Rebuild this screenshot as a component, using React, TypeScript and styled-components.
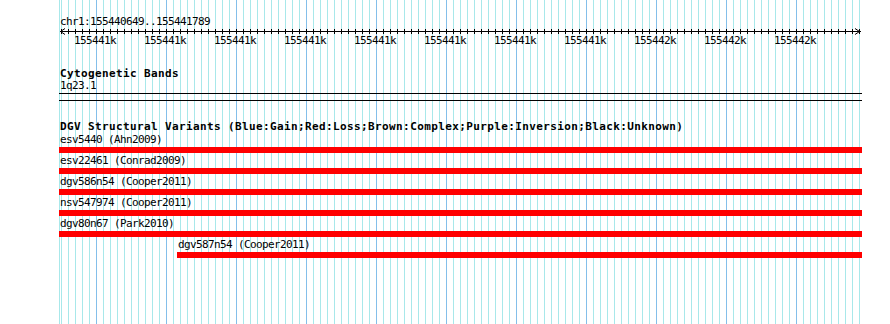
import React from "react";
import styled, { createGlobalStyle } from "styled-components";

const GlobalStyle = createGlobalStyle`
  html, body {
    margin: 0;
    padding: 0;
    background: #ffffff;
  }
`;

const TRACK_WIDTH = 803;
const MINOR = 7;
const GRID_LIGHT = "#a8e8ea";
const GRID_MAJOR = "#84bfea";

const Track = styled.div`
  margin-left: 59px;
  width: ${TRACK_WIDTH}px;
  min-height: 100vh;
  padding-top: 16px;
  box-sizing: border-box;
  font-family: "DejaVu Sans Mono", "Liberation Mono", monospace;
  color: #000;
  background-image:
    linear-gradient(to right, ${GRID_MAJOR} 0 1px, transparent 1px),
    linear-gradient(to right, ${GRID_LIGHT} 0 1px, transparent 1px),
    linear-gradient(to right, ${GRID_LIGHT} 0 1px, transparent 1px);
  background-size: 70px 100%, ${MINOR}px 100%, 1px 100%;
  background-position: 37px 0, 2px 0, 0 0;
  background-repeat: repeat-x, repeat-x, no-repeat;
`;

const Text = styled.div<{ $indent?: number }>`
  font-size: 11px;
  line-height: 11px;
  letter-spacing: -0.62px;
  padding-left: ${(p) => (p.$indent ?? 0) + 1}px;
  white-space: nowrap;
`;

const Title = styled.div<{ $gap: number }>`
  margin-top: ${(p) => p.$gap}px;
  padding-left: 1px;
  font-size: 11px;
  line-height: 11px;
  font-weight: bold;
  letter-spacing: 0.38px;
  white-space: nowrap;
`;

const RulerSvg = styled.svg`
  display: block;
`;

const TickLabels = styled.div`
  display: flex;
  padding-left: 1px;
  margin-top: -1px;
`;

const TickLabel = styled.div`
  width: 70px;
  flex: none;
  text-align: center;
  font-size: 11px;
  line-height: 11px;
  letter-spacing: -0.62px;
`;

const BandName = styled(Text)`
  margin-top: 1px;
`;

const Band = styled.div`
  margin-top: 2px;
  height: 6px;
  border-top: 1px solid #000;
  border-bottom: 1px solid #000;
`;

const Feature = styled.div`
  margin-top: 2px;
`;

const Bar = styled.div<{ $offset: number; $color: string }>`
  margin-top: 2px;
  margin-left: ${(p) => p.$offset}px;
  height: 6px;
  background: ${(p) => p.$color};
`;

const labels = [
  "155441k", "155441k", "155441k", "155441k", "155441k", "155441k",
  "155441k", "155441k", "155442k", "155442k", "155442k",
];

const variants = [
  { name: "esv5440 (Ahn2009)", offset: 0 },
  { name: "esv22461 (Conrad2009)", offset: 0 },
  { name: "dgv586n54 (Cooper2011)", offset: 0 },
  { name: "nsv547974 (Cooper2011)", offset: 0 },
  { name: "dgv80n67 (Park2010)", offset: 0 },
  { name: "dgv587n54 (Cooper2011)", offset: 118 },
];

const Ruler: React.FC = () => {
  const ticks: number[] = [];
  for (let x = 2; x < TRACK_WIDTH - 2; x += MINOR) ticks.push(x + 0.5);
  return (
    <RulerSvg width={TRACK_WIDTH} height={9} shapeRendering="crispEdges">
      <line x1={1} y1={4.5} x2={TRACK_WIDTH - 1} y2={4.5} stroke="#000" />
      {ticks.map((x) => (
        <line key={x} x1={x} y1={2} x2={x} y2={7} stroke="#000" />
      ))}
      <polyline points="6,1.5 1.5,4.5 6,7.5" fill="none" stroke="#000" shapeRendering="auto" />
      <polyline
        points={`${TRACK_WIDTH - 7},1.5 ${TRACK_WIDTH - 2.5},4.5 ${TRACK_WIDTH - 7},7.5`}
        fill="none"
        stroke="#000"
        shapeRendering="auto"
      />
    </RulerSvg>
  );
};

const App: React.FC = () => {
  return (
    <>
      <GlobalStyle />
      <Track>
        <Text>chr1:155440649..155441789</Text>
        <Ruler />
        <TickLabels>
          {labels.map((l, i) => (
            <TickLabel key={i}>{l}</TickLabel>
          ))}
        </TickLabels>
        <Title $gap={22}>Cytogenetic Bands</Title>
        <BandName>1q23.1</BandName>
        <Band />
        <Title $gap={20}>
          DGV Structural Variants (Blue:Gain;Red:Loss;Brown:Complex;Purple:Inversion;Black:Unknown)
        </Title>
        {variants.map((v) => (
          <Feature key={v.name}>
            <Text $indent={v.offset}>{v.name}</Text>
            <Bar $offset={v.offset} $color="#ff0000" />
          </Feature>
        ))}
      </Track>
    </>
  );
};

export default App;
